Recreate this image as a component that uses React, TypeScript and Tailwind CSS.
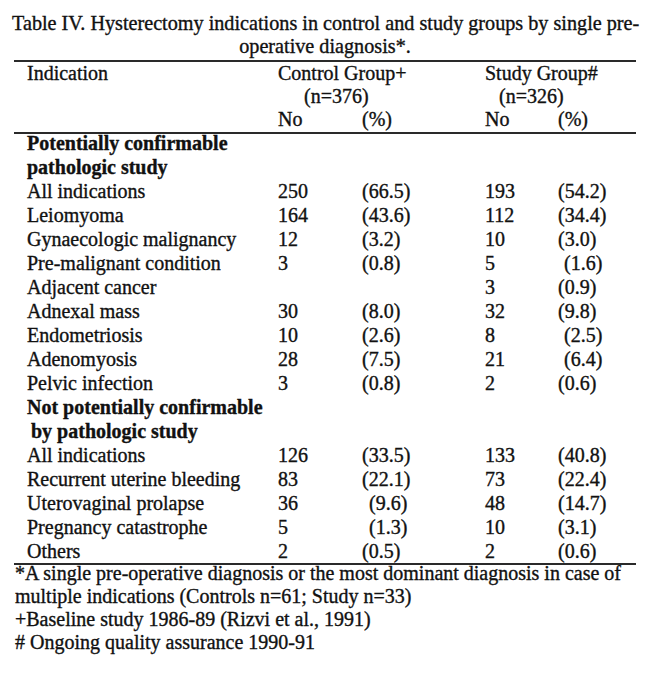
import React from 'react';

type Row = {
  label: string;
  bold?: boolean;
  indent?: boolean;
  cn?: string;
  cp?: string;
  sn?: string;
  sp?: string;
  cpShift?: boolean;
  spShift?: boolean;
};

const rows: Row[] = [
  { label: 'Potentially confirmable', bold: true },
  { label: 'pathologic study', bold: true },
  { label: 'All indications', cn: '250', cp: '(66.5)', sn: '193', sp: '(54.2)' },
  { label: 'Leiomyoma', cn: '164', cp: '(43.6)', sn: '112', sp: '(34.4)' },
  { label: 'Gynaecologic malignancy', cn: '12', cp: '(3.2)', sn: '10', sp: '(3.0)' },
  { label: 'Pre-malignant condition', cn: '3', cp: '(0.8)', sn: '5', sp: '(1.6)', spShift: true },
  { label: 'Adjacent cancer', sn: '3', sp: '(0.9)' },
  { label: 'Adnexal mass', cn: '30', cp: '(8.0)', sn: '32', sp: '(9.8)' },
  { label: 'Endometriosis', cn: '10', cp: '(2.6)', sn: '8', sp: '(2.5)', spShift: true },
  { label: 'Adenomyosis', cn: '28', cp: '(7.5)', sn: '21', sp: '(6.4)', spShift: true },
  { label: 'Pelvic infection', cn: '3', cp: '(0.8)', sn: '2', sp: '(0.6)' },
  { label: 'Not potentially confirmable', bold: true },
  { label: 'by pathologic study', bold: true, indent: true },
  { label: 'All indications', cn: '126', cp: '(33.5)', sn: '133', sp: '(40.8)' },
  { label: 'Recurrent uterine bleeding', cn: '83', cp: '(22.1)', sn: '73', sp: '(22.4)' },
  { label: 'Uterovaginal prolapse', cn: '36', cp: '(9.6)', sn: '48', sp: '(14.7)', cpShift: true },
  { label: 'Pregnancy catastrophe', cn: '5', cp: '(1.3)', sn: '10', sp: '(3.1)', cpShift: true },
  { label: 'Others', cn: '2', cp: '(0.5)', sn: '2', sp: '(0.6)' },
];

const grid = 'grid grid-cols-[251px_84px_123px_73px_1fr] pl-[27px]';

export default function App() {
  return (
    <div
      className="w-[650px] h-[673px] bg-white text-[#111] text-[20px] [-webkit-text-stroke:0.35px_#111]"
      style={{ fontFamily: '"Liberation Serif", "Times New Roman", serif' }}
    >
      {/* Caption */}
      <div className="pt-[12px] px-[12px] leading-[23px] text-center text-[20.2px]">
        <div className="whitespace-nowrap">
          Table IV. Hysterectomy indications in control and study groups by single pre-
        </div>
        <div>operative diagnosis*.</div>
      </div>

      <div className="mx-[14px] mt-[2px] h-[2px] bg-[#2a2a2a]" />

      {/* Column headers */}
      <div className={`${grid} leading-[23px]`}>
        <div>Indication</div>
        <div className="col-span-2 whitespace-nowrap">Control Group+</div>
        <div className="col-span-2 whitespace-nowrap">Study Group#</div>

        <div />
        <div className="col-span-2 pl-[26px]">(n=376)</div>
        <div className="col-span-2 pl-[14px]">(n=326)</div>

        <div />
        <div>No</div>
        <div>(%)</div>
        <div>No</div>
        <div>(%)</div>
      </div>

      <div className="mx-[14px] mt-[1px] h-[2px] bg-[#2a2a2a]" />

      {/* Body */}
      <div className={`${grid} -mt-[3px] leading-[24px]`}>
        {rows.map((r, i) => (
          <React.Fragment key={i}>
            <div
              className={`whitespace-nowrap ${r.bold ? 'font-bold' : ''} ${r.indent ? 'pl-[4px]' : ''}`}
            >
              {r.label}
            </div>
            <div>{r.cn ?? ''}</div>
            <div className={r.cpShift ? 'pl-[7px]' : ''}>{r.cp ?? ''}</div>
            <div>{r.sn ?? ''}</div>
            <div className={r.spShift ? 'pl-[6px]' : ''}>{r.sp ?? ''}</div>
          </React.Fragment>
        ))}
      </div>

      <div className="mx-[14px] h-[2px] bg-[#2a2a2a]" />

      {/* Footnotes */}
      <div className="-mt-[3px] px-[15px] leading-[23px]">
        <div className="whitespace-nowrap">
          *A single pre-operative diagnosis or the most dominant diagnosis in case of
        </div>
        <div>multiple indications (Controls n=61; Study n=33)</div>
        <div>+Baseline study 1986-89 (Rizvi et al., 1991)</div>
        <div># Ongoing quality assurance 1990-91</div>
      </div>
    </div>
  );
}
